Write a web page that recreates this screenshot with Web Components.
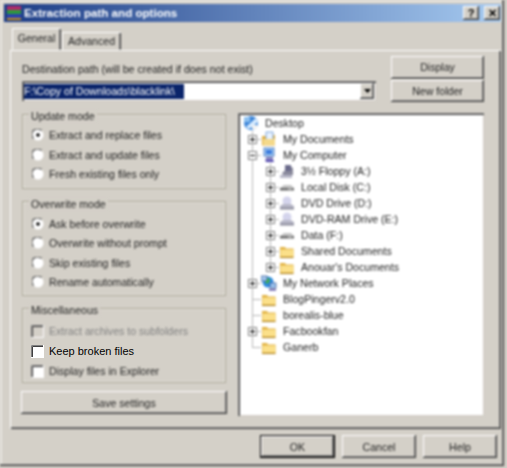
<!DOCTYPE html>
<html>
<head>
<meta charset="utf-8">
<title>Extraction path and options</title>
<style>
html, body { margin: 0; padding: 0; background: #d4d0c8; }
body { font: 10.6px "Liberation Sans", Arial, sans-serif; color: #222; width: 507px; height: 468px; overflow: hidden; --soft: blur(1.1px); }
</style>
</head>
<body>
<rar-dialog>
  <title-bar slot="title">Extraction path and options</title-bar>
  <tab-page slot="page">
    <div slot="top-left">
      <soft-label style="height:25px;align-items:flex-end;padding-bottom:6px">Destination path (will be created if does not exist)</soft-label>
      <path-combo>F:\Copy of Downloads\blacklink\</path-combo>
    </div>
    <push-button slot="top-right" style="height:23px">Display</push-button>
    <push-button slot="top-right" style="height:23px">New folder</push-button>

    <opt-group slot="left" label="Update mode" style="height:75px;--ty:-4px;--rows:3.25px;--row:19.5px">
      <opt-item kind="radio" checked>Extract and replace files</opt-item>
      <opt-item kind="radio">Extract and update files</opt-item>
      <opt-item kind="radio">Fresh existing files only</opt-item>
    </opt-group>
    <opt-group slot="left" label="Overwrite mode" style="height:95px;--ty:-3px;--rows:4.3px;--row:19.4px">
      <opt-item kind="radio" checked>Ask before overwrite</opt-item>
      <opt-item kind="radio">Overwrite without prompt</opt-item>
      <opt-item kind="radio">Skip existing files</opt-item>
      <opt-item kind="radio">Rename automatically</opt-item>
    </opt-group>
    <opt-group slot="left" label="Miscellaneous" style="height:75px;--ty:-4px;--rows:5px;--row:20px">
      <opt-item kind="check" disabled>Extract archives to subfolders</opt-item>
      <opt-item kind="check" sharp>Keep broken files</opt-item>
      <opt-item kind="check">Display files in Explorer</opt-item>
    </opt-group>
    <push-button slot="left" style="height:23px;margin:-4px -1px 0">Save settings</push-button>

    <folder-tree slot="right">
      <tree-row icon="desktop">Desktop</tree-row>
      <tree-row level="1" exp="+" icon="docs">My Documents</tree-row>
      <tree-row level="1" exp="-" icon="computer">My Computer</tree-row>
      <tree-row level="2" exp="+" icon="floppy">3½ Floppy (A:)</tree-row>
      <tree-row level="2" exp="+" icon="disk">Local Disk (C:)</tree-row>
      <tree-row level="2" exp="+" icon="dvd">DVD Drive (D:)</tree-row>
      <tree-row level="2" exp="+" icon="dvd">DVD-RAM Drive (E:)</tree-row>
      <tree-row level="2" exp="+" icon="disk">Data (F:)</tree-row>
      <tree-row level="2" exp="+" icon="folder">Shared Documents</tree-row>
      <tree-row level="2" exp="+" icon="folder" last>Anouar's Documents</tree-row>
      <tree-row level="1" exp="+" icon="network">My Network Places</tree-row>
      <tree-row level="1" icon="folder">BlogPingerv2.0</tree-row>
      <tree-row level="1" icon="folder">borealis-blue</tree-row>
      <tree-row level="1" exp="+" icon="folder">Facbookfan</tree-row>
      <tree-row level="1" icon="folder" last>Ganerb</tree-row>
    </folder-tree>
  </tab-page>
  <push-button slot="actions" default style="width:75px;height:23px">OK</push-button>
  <push-button slot="actions" style="width:74px;height:23px">Cancel</push-button>
  <push-button slot="actions" style="width:74px;height:23px">Help</push-button>
</rar-dialog>

<script>
const OUTSET = "inset -1px -1px 0 #404040, inset 1px 1px 0 #fff, inset -2px -2px 0 #808080";

const ICONS = {
  folder: `<path d="M1 4h5l1 1.5h7.5V14.5H1z" fill="#e0b040"/><path d="M1.5 6.5h13V13.5h-13z" fill="#fbe08a"/><path d="M1 14.5h13.5" stroke="#a87c1c"/>`,
  desktop: `<circle cx="8" cy="8" r="7" fill="#3f86d8"/><path d="M3 12 L13 3 L15 7 L6 14z" fill="#d8ecff"/><rect x="1" y="2" width="6" height="5" fill="#8cc0f0"/><path d="M9 10h5v4H9z" fill="#f2f2f2"/>`,
  docs: `<path d="M1 5h4v-1h9v10.5H1z" fill="#e2b040"/><path d="M5 1h7v9H5z" fill="#e8f2ff" stroke="#7fa6d8"/><path d="M2 8h12v6H2z" fill="#f4d98a"/>`,
  computer: `<rect x="3" y="1" width="10" height="8" fill="#9cc8f4" stroke="#5a84c4"/><rect x="5" y="3" width="6" height="4" fill="#3a7adc"/><path d="M5 10h7v2H5z" fill="#7a7ab8"/><path d="M4 12.5h8l1 2.5H5z" fill="#4a3fa8"/>`,
  floppy: `<path d="M3 10 L11 3 L14 5 L14 12 L5 14z" fill="#8a8a9c"/><rect x="6" y="2" width="6" height="6" fill="#6a6a8a"/><path d="M1 12h12v3H1z" fill="#b8b8c8"/>`,
  disk: `<path d="M1 9 L5 6 H12 L15 9 V11 H1z" fill="#c4c4c4"/><path d="M1 9h14v2.5H1z" fill="#6c6c6c"/><path d="M9 10h4" stroke="#d8d8d8"/>`,
  dvd: `<ellipse cx="8" cy="6" rx="4.5" ry="4.5" fill="#d4d4ec"/><path d="M1 11 L4 9 H12 L15 11 V14 H1z" fill="#b8b8c8"/><path d="M1 12.5h14V14.5H1z" fill="#8c8c9c"/>`,
  network: `<circle cx="7" cy="7" r="5.5" fill="#2f8ae0"/><path d="M4 4l4-1 1 3-3 3-2-2z" fill="#40b848"/><rect x="0" y="1" width="6" height="5" fill="#a4c8ee" stroke="#33518c" stroke-width=".7"/><rect x="9" y="8" width="6" height="5" fill="#9cc4f0" stroke="#33518c" stroke-width=".7"/><path d="M8 14h7v1.5H8z" fill="#55489c"/>`,
};

class RarDialog extends HTMLElement {
  connectedCallback() {
    this.attachShadow({ mode: "open" });
    this.shadowRoot.innerHTML = `
    <style>
      :host { display: grid; width: 507px; height: 468px; }
      .edge { grid-area: 1 / 1; margin: 0 3px 2px 0; filter: var(--soft);
        box-shadow: inset -1px -1px 0 #404040, inset -2px -2px 0 #808080, inset 2px 2px 0 #e8e6e0; }
      .body { grid-area: 1 / 1; display: flex; flex-direction: column; padding: 4px 6px 0 4px; }
      .actions { display: flex; justify-content: flex-end; gap: 7px; margin: 6px 0 0; padding-right: 4px; }
    </style>
    <div class="edge"></div>
    <div class="body">
      <slot name="title"></slot>
      <slot name="page"></slot>
      <div class="actions"><slot name="actions"></slot></div>
    </div>`;
  }
}

class TitleBar extends HTMLElement {
  connectedCallback() {
    const text = this.textContent;
    this.attachShadow({ mode: "open" });
    this.shadowRoot.innerHTML = `
    <style>
      :host { display: flex; align-items: center; height: 18px; padding: 0 1px 0 3px; gap: 3px; color: #fff; font-weight: bold; font-size: 11.6px;
        background: linear-gradient(90deg, #1c3c86, #a6caf0); filter: var(--soft); }
      .name { flex: 1; padding-bottom: 1px; }
      .btn { width: 16px; height: 14px; background: #d4d0c8; box-shadow: ${OUTSET}; display: flex; align-items: center; justify-content: center; color: #000; font-size: 11px; }
      .gap { margin-left: 2px; }
    </style>
    <svg width="14" height="16" viewBox="0 0 14 16">
      <rect x="0" y="1" width="14" height="4" fill="#b02a6a"/>
      <rect x="0" y="5" width="14" height="4" fill="#2e9a3c"/>
      <rect x="0" y="9" width="14" height="4" fill="#2a40b0"/>
      <rect x="0" y="13" width="14" height="2" fill="#c89020"/>
    </svg>
    <span class="name">${text}</span>
    <span class="btn">?</span>
    <span class="btn gap">✕</span>`;
  }
}

class TabPage extends HTMLElement {
  connectedCallback() {
    this.attachShadow({ mode: "open" });
    this.shadowRoot.innerHTML = `
    <style>
      :host { display: block; margin: 6px 0 0 6px; }
      .strip { display: flex; align-items: flex-end; height: 22px; padding-left: 2px; filter: var(--soft); }
      .tab { display: flex; align-items: center; justify-content: center; box-shadow: inset 1px 1px 0 #fff, inset -1px 0 0 #404040, inset -2px 0 0 #808080; }
      .on { width: 49px; height: 22px; padding-bottom: 2px; box-sizing: border-box; }
      .off { width: 59px; height: 18px; margin-left: 1px; }
      .panel { display: grid; height: 379px; }
      .frame { grid-area: 1 / 1; filter: var(--soft);
        box-shadow: inset 1px 1px 0 #fff, inset -1px -1px 0 #404040, inset -2px -2px 0 #808080; }
      .content { grid-area: 1 / 1; display: flex; flex-direction: column; padding: 6px 12px 0 12px; }
      .top { display: flex; gap: 15px; height: 46px; }
      .top-left { width: 354px; }
      .top-right { width: 93px; display: flex; flex-direction: column; gap: 1px; }
      .low { display: flex; gap: 12px; margin-top: 11px; }
      .left { width: 204px; display: flex; flex-direction: column; gap: 12px; padding-top: 1px; }
    </style>
    <div class="strip"><span class="tab on">General</span><span class="tab off">Advanced</span></div>
    <div class="panel">
      <div class="frame"></div>
      <div class="content">
        <div class="top">
          <div class="top-left"><slot name="top-left"></slot></div>
          <div class="top-right"><slot name="top-right"></slot></div>
        </div>
        <div class="low">
          <div class="left"><slot name="left"></slot></div>
          <slot name="right"></slot>
        </div>
      </div>
    </div>`;
  }
}

class SoftLabel extends HTMLElement {
  connectedCallback() {
    this.attachShadow({ mode: "open" });
    this.shadowRoot.innerHTML = `
    <style>:host { display: flex; box-sizing: border-box; filter: var(--soft); }</style><slot></slot>`;
  }
}

class PathCombo extends HTMLElement {
  connectedCallback() {
    const text = this.textContent;
    this.attachShadow({ mode: "open" });
    this.shadowRoot.innerHTML = `
    <style>
      :host { display: flex; align-items: center; height: 20px; box-sizing: border-box; padding: 2px; background: #fff; filter: var(--soft);
        box-shadow: inset 1px 1px 0 #808080, inset 2px 2px 0 #404040, inset -1px -1px 0 #d4d0c8; }
      .sel { background: #0a246a; color: #fff; width: 160px; height: 15px; line-height: 15px; white-space: nowrap; overflow: hidden; }
      .fill { flex: 1; }
      .drop { width: 14px; height: 16px; background: #d4d0c8; box-shadow: ${OUTSET}; display: flex; align-items: center; justify-content: center; }
    </style>
    <span class="sel">${text}</span><span class="fill"></span>
    <span class="drop"><svg width="7" height="4" viewBox="0 0 7 4"><path d="M0 0h7L3.5 4z"/></svg></span>`;
  }
}

class PushButton extends HTMLElement {
  connectedCallback() {
    const extra = this.hasAttribute("default")
      ? "inset 0 0 0 1px #000, inset -2px -2px 0 #404040, inset 2px 2px 0 #fff, inset -3px -3px 0 #808080"
      : OUTSET;
    this.attachShadow({ mode: "open" });
    this.shadowRoot.innerHTML = `
    <style>
      :host { display: flex; align-items: center; justify-content: center; box-sizing: border-box; background: #d4d0c8; box-shadow: ${extra}; filter: var(--soft); }
    </style><slot></slot>`;
  }
}

class OptGroup extends HTMLElement {
  connectedCallback() {
    const label = this.getAttribute("label");
    this.attachShadow({ mode: "open" });
    this.shadowRoot.innerHTML = `
    <style>
      :host { display: grid; box-sizing: border-box; }
      .frame { grid-area: 1 / 1; filter: var(--soft);
        box-shadow: inset 0 0 0 1px #aca899, inset 0 0 0 2px #e4e2da; }
      .inner { grid-area: 1 / 1; display: flex; flex-direction: column; min-width: 0; }
      .title { align-self: flex-start; height: 12px; line-height: 12px; margin: var(--ty) 0 0 7px; padding: 0 2px; background: #d4d0c8; filter: var(--soft); }
      .rows { display: grid; grid-auto-rows: var(--row); margin-top: var(--rows); }
    </style>
    <div class="frame"></div>
    <div class="inner">
      <span class="title">${label}</span>
      <div class="rows"><slot></slot></div>
    </div>`;
  }
}

class OptItem extends HTMLElement {
  connectedCallback() {
    const radio = this.getAttribute("kind") === "radio";
    const on = this.hasAttribute("checked");
    const off = this.hasAttribute("disabled");
    const sharp = this.hasAttribute("sharp");
    const fill = off ? "#d4d0c8" : "#fff";
    const mark = radio
      ? `<svg width="12" height="12" viewBox="0 0 12 12">
           <circle cx="6" cy="6" r="5.5" fill="#fff"/>
           <path d="M1.5 9.5A5.5 5.5 0 0 1 9.5 1.5" fill="none" stroke="#707070" stroke-width="1.6"/>
           ${on ? '<circle cx="6" cy="6" r="1.8" fill="#000"/>' : ""}
         </svg>`
      : `<svg width="13" height="13" viewBox="0 0 13 13">
           <rect x="0" y="0" width="13" height="13" fill="${fill}"/>
           <path d="M.5 13V.5H13" fill="none" stroke="#808080"/>
           <path d="M1.5 12V1.5H12" fill="none" stroke="#404040"/>
           <path d="M12.5 0V12.5H0" fill="none" stroke="#fff"/>
         </svg>`;
    this.attachShadow({ mode: "open" });
    this.shadowRoot.innerHTML = `
    <style>
      :host { display: flex; align-items: center; gap: 5px; padding-left: ${radio ? 10 : 9}px; white-space: nowrap;
        ${sharp ? "font-size: 11px; color: #000;" : "filter: var(--soft);"} ${off ? "color: #808080;" : ""} }
      svg { flex: none; }
    </style>${mark}<span><slot></slot></span>`;
  }
}

class FolderTree extends HTMLElement {
  connectedCallback() {
    this.attachShadow({ mode: "open" });
    this.shadowRoot.innerHTML = `
    <style>
      :host { display: block; box-sizing: border-box; width: 246px; height: 303px; padding: 2px; background: #fff; filter: var(--soft);
        box-shadow: inset 1px 1px 0 #808080, inset 2px 2px 0 #404040, inset -1px -1px 0 #d4d0c8; }
    </style><slot></slot>`;
  }
}

class TreeRow extends HTMLElement {
  connectedCallback() {
    const level = Number(this.getAttribute("level") || 0);
    const exp = this.getAttribute("exp");
    const last = this.hasAttribute("last");
    const icon = this.getAttribute("icon");
    let cells = "";
    for (let i = 1; i <= level; i++) {
      const own = i === level;
      const cls = own ? (last ? "cell elbow" : "cell tee") : "cell pass";
      let box = "";
      if (own && exp) {
        const bar = exp === "-" ? "M2 4.5h5" : "M2 4.5h5M4.5 2v5";
        box = `<svg width="9" height="9" viewBox="0 0 9 9"><rect x=".5" y=".5" width="8" height="8" fill="#fff" stroke="#808080"/><path d="${bar}" stroke="#000"/></svg>`;
      }
      cells += `<span class="${cls}">${box}</span>`;
    }
    this.attachShadow({ mode: "open" });
    this.shadowRoot.innerHTML = `
    <style>
      :host { display: flex; align-items: center; height: 16px; padding-left: 3px; white-space: nowrap; }
      .cell { flex: none; width: 18px; height: 16px; display: flex; align-items: center; justify-content: center; background-repeat: no-repeat; }
      .pass { background-image: linear-gradient(#b8b8b8, #b8b8b8); background-size: 1px 16px; background-position: 9px 0; }
      .tee { background-image: linear-gradient(#b8b8b8, #b8b8b8), linear-gradient(#b8b8b8, #b8b8b8); background-size: 1px 16px, 9px 1px; background-position: 9px 0, 9px 8px; }
      .elbow { background-image: linear-gradient(#b8b8b8, #b8b8b8), linear-gradient(#b8b8b8, #b8b8b8); background-size: 1px 9px, 9px 1px; background-position: 9px 0, 9px 8px; }
      .icon { flex: none; margin-right: 6px; }
    </style>${cells}<svg class="icon" width="16" height="16" viewBox="0 0 16 16">${ICONS[icon]}</svg><span><slot></slot></span>`;
  }
}

customElements.define("rar-dialog", RarDialog);
customElements.define("title-bar", TitleBar);
customElements.define("tab-page", TabPage);
customElements.define("soft-label", SoftLabel);
customElements.define("path-combo", PathCombo);
customElements.define("push-button", PushButton);
customElements.define("opt-group", OptGroup);
customElements.define("opt-item", OptItem);
customElements.define("folder-tree", FolderTree);
customElements.define("tree-row", TreeRow);
</script>
</body>
</html>
